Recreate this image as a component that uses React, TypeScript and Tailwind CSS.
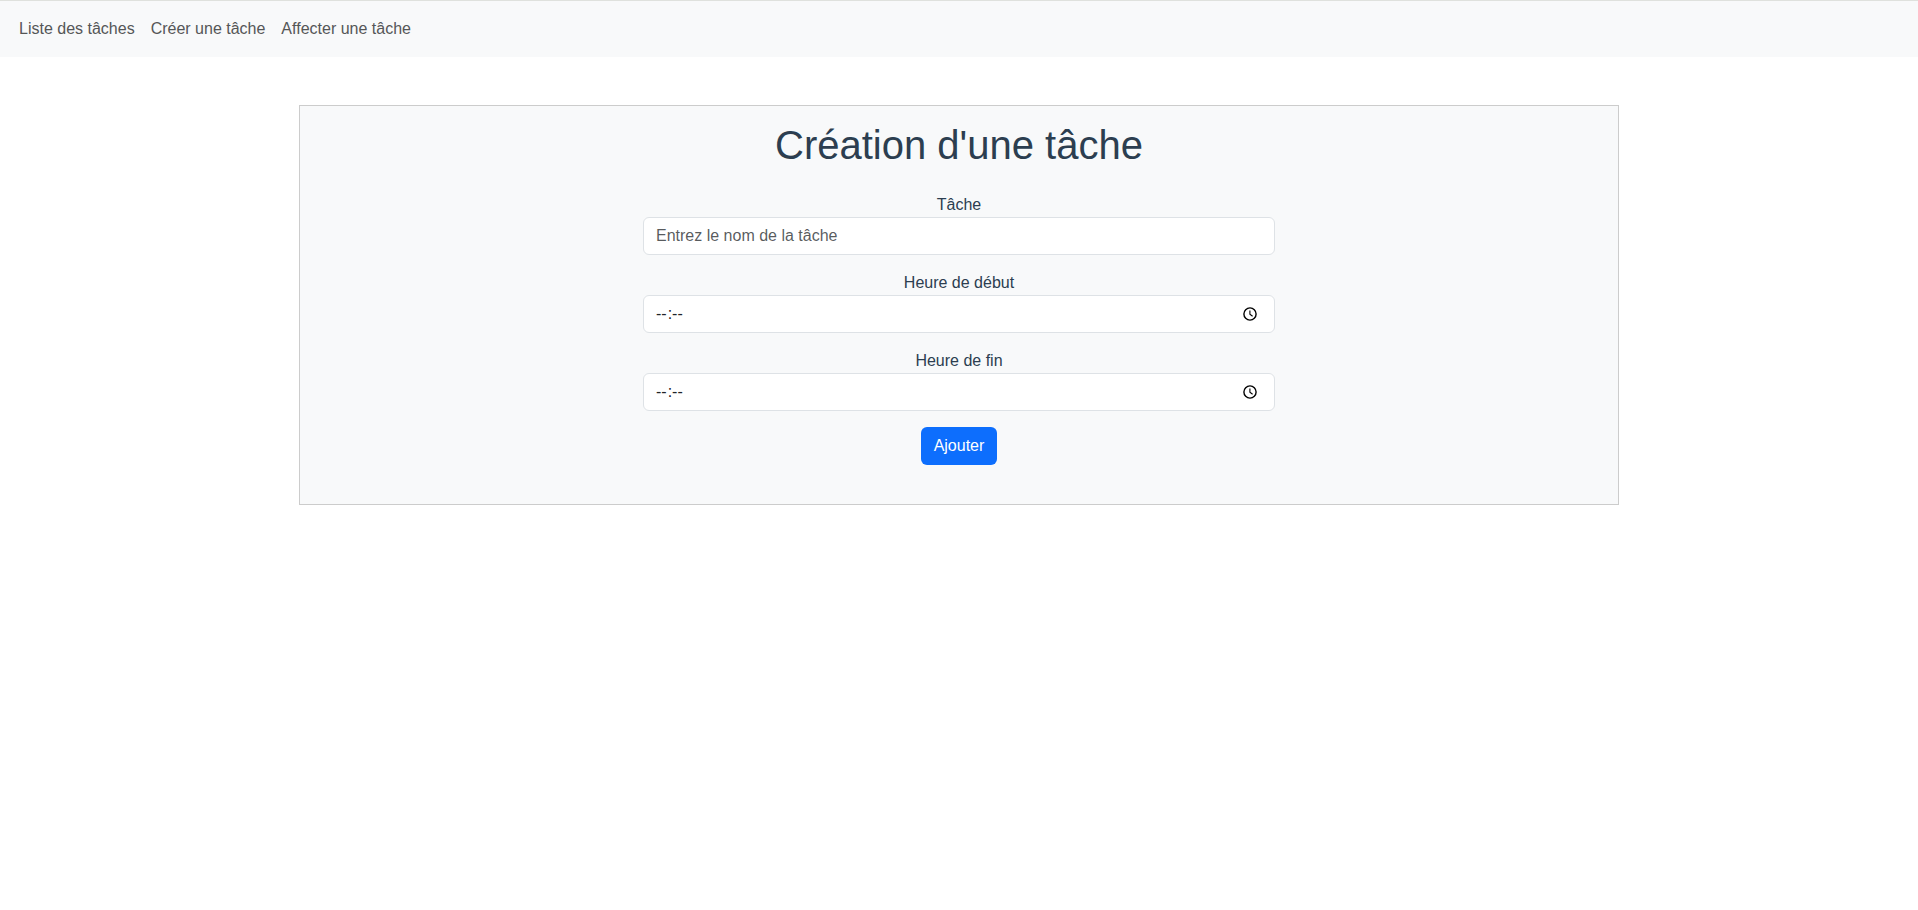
import React from "react";

const links = ["Liste des tâches", "Créer une tâche", "Affecter une tâche"];

function ClockIcon() {
  return (
    <svg className="mr-[5px]" width="14" height="14" viewBox="0 0 14 14" fill="none" stroke="#000" aria-hidden="true">
      <circle cx="7" cy="7" r="6.1" strokeWidth="1.4" />
      <path d="M6.9 3.5v3.8l2.7 2" strokeWidth="1.1" />
    </svg>
  );
}

function TimeField({ label }: { label: string }) {
  return (
    <div className="mb-4 flex w-[632px] flex-col">
      <span className="text-center">{label}</span>
      <div className="flex h-[38px] items-center justify-between rounded-md border border-[#dee2e6] bg-white px-3 text-[#212529]">
        <span className="flex">
          <span className="pr-px">--</span>
          <span>:</span>
          <span>--</span>
        </span>
        <ClockIcon />
      </div>
    </div>
  );
}

export default function App() {
  return (
    <div className="min-h-screen bg-white font-['Liberation_Sans',Arial,sans-serif] text-base leading-6 text-[#2c3e50]">
      <nav className="flex h-[57px] items-center gap-4 border-t border-[#dfe1dd] bg-[#f8f9fa] px-[19px] text-[#555657]">
        {links.map((l) => (
          <a key={l} href="#">{l}</a>
        ))}
      </nav>
      <main className="mx-auto mt-12 flex h-[400px] w-[1320px] flex-col items-center border border-[#ccc] bg-[#f8f9fa] pt-[15px]">
        <h1 className="mb-6 text-[40px] leading-[48px]">Création d'une tâche</h1>
        <div className="mb-4 flex w-[632px] flex-col">
          <span className="text-center">Tâche</span>
          <input
            className="h-[38px] rounded-md border border-[#dee2e6] bg-white px-3 placeholder:text-[#212529]/75"
            placeholder="Entrez le nom de la tâche"
          />
        </div>
        <TimeField label="Heure de début" />
        <TimeField label="Heure de fin" />
        <button className="h-[38px] rounded-md bg-[#0d6efd] px-[13px] text-white">Ajouter</button>
      </main>
    </div>
  );
}
